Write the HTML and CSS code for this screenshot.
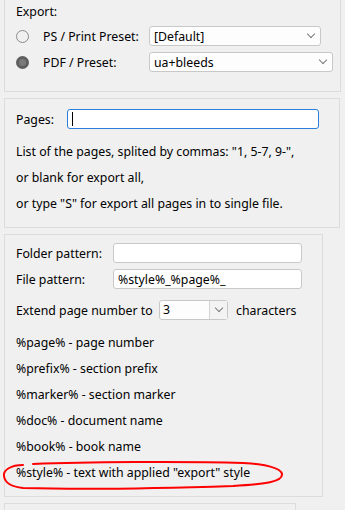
FILE: index.html
```html
<!DOCTYPE html>
<html>
<head>
<meta charset="utf-8">
<link rel="stylesheet" href="styles.css">
</head>
<body>
<div class="page">
  <section class="panel panel-export">
    <div class="caption">Export:</div>
    <div class="row">
      <span class="radio"></span>
      <span class="rlabel">PS / Print Preset:</span>
      <div class="select sel1"><span>[Default]</span><span class="chev"></span></div>
    </div>
    <div class="row">
      <span class="radio checked"></span>
      <span class="rlabel">PDF / Preset:</span>
      <div class="select sel2"><span>ua+bleeds</span><span class="chev"></span></div>
    </div>
  </section>

  <section class="panel panel-pages">
    <div class="row">
      <span class="plabel">Pages:</span>
      <div class="input focus"><span class="caret"></span></div>
    </div>
    <div class="lines">
      <div class="line">List of the pages, splited by commas: "1, 5-7, 9-",</div>
      <div class="line">or blank for export all,</div>
      <div class="line">or type "S" for export all pages in to single file.</div>
    </div>
  </section>

  <section class="panel panel-pattern">
    <div class="row">
      <span class="flabel">Folder pattern:</span>
      <div class="input pat"></div>
    </div>
    <div class="row row-file">
      <span class="flabel">File pattern:</span>
      <div class="input pat"><span>%style%_%page%_</span></div>
    </div>
    <div class="row row-extend">
      <span class="elabel">Extend page number to</span>
      <div class="combo"><span class="cval">3</span><span class="cbtn"><span class="chev"></span></span></div>
      <span class="after">characters</span>
    </div>
    <div class="lines">
      <div class="line">%page% - page number</div>
      <div class="line">%prefix% - section prefix</div>
      <div class="line">%marker% - section marker</div>
      <div class="line">%doc% - document name</div>
      <div class="line">%book% - book name</div>
      <div class="line">%style% - text with applied "export" style</div>
    </div>
    <svg class="circle" width="290" height="40" viewBox="0 0 290 40">
      <path d="M30 4 C 80 2, 180 1, 240 3 C 262 4, 278 8, 279 14 C 280 22, 262 24, 230 26 C 170 28, 90 30, 20 28 C 10 27, 2 24, 1 16 C 0 10, 8 5, 20 5" fill="none" stroke="#ff0000" stroke-width="2" stroke-linecap="round"/>
    </svg>
  </section>

  <section class="panel panel-last"></section>
</div>
</body>
</html>
```

FILE: styles.css
```css
html, body {
  margin: 0;
  padding: 0;
  background: #f0f0f0;
}
body {
  width: 345px;
  height: 510px;
  overflow: hidden;
  font-family: "Noto Sans", "Open Sans", sans-serif;
  font-size: 12.3px;
  color: #000;
}
.page {
  display: flex;
  flex-direction: column;
  gap: 6px;
  padding-left: 4px;
}
.panel {
  box-sizing: border-box;
  border: 1px solid #dcdcdc;
  position: relative;
  padding-left: 11px;
}
.panel-export {
  width: 337px;
  height: 92px;
  border-top: none;
  padding-top: 4px;
}
.caption {
  height: 16px;
  line-height: 16px;
}
.row {
  display: flex;
  align-items: center;
  height: 20px;
}
.panel-export .row { margin-top: 6px; }
.panel-export .row + .row { margin-top: 6px; }
.radio {
  box-sizing: border-box;
  width: 13px;
  height: 13px;
  border-radius: 50%;
  border: 1px solid #8a8a8a;
  margin-right: 14px;
}
.radio.checked {
  border: 3px solid #5f5f5f;
  background: #7a7a7a;
}
.rlabel {
  width: 106px;
}
.select {
  box-sizing: border-box;
  height: 20px;
  background: #fdfdfd;
  border: 1px solid #c8c8c8;
  border-radius: 3px;
  display: flex;
  align-items: center;
  justify-content: space-between;
  padding: 0 6px 0 4px;
}
.sel1 { width: 172px; }
.sel2 { width: 184px; }
.chev {
  width: 5px;
  height: 5px;
  border-right: 1px solid #7a7a7a;
  border-bottom: 1px solid #7a7a7a;
  transform: translateY(-2px) rotate(45deg);
  transform-origin: center;
}
.panel-pages {
  width: 336px;
  height: 130px;
  padding-top: 10px;
}
.plabel { width: 51px; }
.input {
  box-sizing: border-box;
  height: 20px;
  background: #fff;
  border: 1px solid #c8c8c8;
  border-radius: 3px;
  display: flex;
  align-items: center;
  padding-left: 4px;
}
.input.focus {
  width: 252px;
  border-color: #2a7fd8;
}
.caret {
  width: 1px;
  height: 14px;
  background: #000;
}
.lines {
  margin-top: 10px;
}
.line {
  height: 26px;
  line-height: 26px;
  white-space: nowrap;
}
.panel-pattern {
  width: 319px;
  height: 263px;
  padding-top: 8px;
}
.flabel { width: 97px; }
.input.pat { width: 189px; }
.row-file { margin-top: 6px; }
.row-extend { margin-top: 11px; }
.elabel { width: 143px; }
.combo {
  box-sizing: border-box;
  width: 69px;
  height: 20px;
  background: #fdfdfd;
  border: 1px solid #c8c8c8;
  border-radius: 3px;
  display: flex;
}
.cval {
  flex: 1;
  padding-left: 3px;
  line-height: 18px;
}
.cbtn {
  width: 17px;
  border-left: 1px solid #d4d4d4;
  background: #f3f3f3;
  display: flex;
  align-items: center;
  justify-content: center;
}
.after { margin-left: 8px; }
.circle {
  position: absolute;
  left: -2px;
  top: 225px;
}
.panel-last {
  width: 292px;
  height: 30px;
}
```
